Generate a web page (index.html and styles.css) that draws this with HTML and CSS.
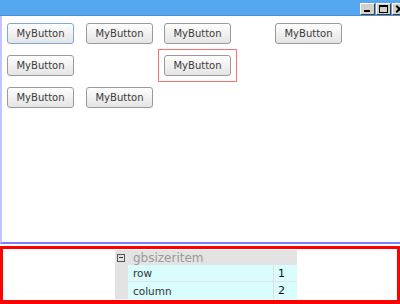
FILE: index.html
```html
<!DOCTYPE html>
<html lang="en">
<head>
  <meta charset="UTF-8">
  <title>gbsizer</title>
  <link rel="stylesheet" href="styles.css">
</head>
<body>

  <!-- Frame -->
  <div class="frame">
    <div class="titlebar">
      <div class="tb-btn"><span class="ico-min"></span></div>
      <div class="tb-btn"><span class="ico-max"></span></div>
      <div class="tb-btn"><span class="ico-close"></span></div>
    </div>

    <div class="client">
      <div class="grid">
        <div class="cell"><button class="btn focus">MyButton</button></div>
        <div class="cell"><button class="btn">MyButton</button></div>
        <div class="cell c2"><button class="btn">MyButton</button></div>
        <div class="cell"><button class="btn">MyButton</button></div>

        <div class="cell"><button class="btn">MyButton</button></div>
        <div class="cell"></div>
        <div class="cell selbox"><button class="btn">MyButton</button></div>
        <div class="cell"></div>

        <div class="cell"><button class="btn">MyButton</button></div>
        <div class="cell"><button class="btn">MyButton</button></div>
      </div>
    </div>
  </div>

  <!-- Property grid -->
  <div class="props">
    <div class="pgrid">
      <div class="pg-head">
        <span class="toggle"></span>
        <span class="pg-title">gbsizeritem</span>
      </div>
      <div class="pg-row">
        <div class="pg-name">row</div>
        <div class="pg-val">1</div>
      </div>
      <div class="pg-row">
        <div class="pg-name">column</div>
        <div class="pg-val">2</div>
      </div>
    </div>
  </div>

</body>
</html>
```

FILE: styles.css
```css
* { margin: 0; padding: 0; box-sizing: border-box; }

body {
  width: 400px;
  height: 304px;
  overflow: hidden;
  background: #fff;
  font-family: "DejaVu Sans", sans-serif;
}

.titlebar {
  height: 16px;
  background: #55a8ee;
  border-bottom: 1px solid #4a90d8;
  display: flex;
  justify-content: flex-end;
  align-items: flex-start;
  padding-top: 3px;
  gap: 1px;
  margin-right: -7px;
}

.tb-btn {
  width: 15px;
  height: 12px;
  background: #d4d0c8;
  border: 1px solid;
  border-color: #fff #404040 #404040 #fff;
  position: relative;
}

.ico-min {
  position: absolute;
  left: 3px; bottom: 2px;
  width: 6px; height: 2px;
  background: #000;
}

.ico-max {
  position: absolute;
  left: 2px; top: 1px;
  width: 9px; height: 8px;
  border: 1px solid #000;
  border-top-width: 2px;
}

.ico-close::before,
.ico-close::after {
  content: "";
  position: absolute;
  left: 2px; top: 4px;
  width: 9px; height: 2px;
  background: #000;
  transform: rotate(45deg);
}

.ico-close::after { transform: rotate(-45deg); }

.client {
  height: 228px;
  border-left: 2px solid #c4c4ff;
  border-bottom: 2px solid #7f7fff;
}

.grid {
  display: grid;
  grid-template-columns: 79px 72px 117px auto;
  grid-template-rows: repeat(3, 32px);
  align-items: center;
  padding: 1px 0 0 5px;
}

.cell { display: flex; align-items: center; }

.c2 { padding-left: 6px; }

.selbox {
  width: 79px;
  height: 33px;
  border: 1px solid #ff7070;
  padding-left: 5px;
}

.btn {
  width: 67px;
  height: 21px;
  font-family: "DejaVu Sans", sans-serif;
  font-size: 10px;
  color: #3a3a3a;
  background: linear-gradient(#fefefe, #e4e4e4);
  border: 1px solid #9a9a9a;
  border-radius: 3px;
}

.btn.focus { border-color: #7ea8d8; }

.props {
  margin-top: 2px;
  height: 58px;
  border: 3px solid #ff0000;
  border-bottom-width: 4px;
  padding: 1px 0 0 112px;
}

.pgrid { width: 182px; }

.pg-head {
  height: 15px;
  background: #e3e3e3;
  display: flex;
  align-items: center;
}

.toggle {
  width: 8px;
  height: 8px;
  margin: 0 8px 0 2px;
  border: 1px solid #555;
  position: relative;
}

.toggle::after {
  content: "";
  position: absolute;
  left: 1px; top: 2px;
  width: 4px; height: 1px;
  background: #333;
}

.pg-title {
  font-size: 12px;
  color: #999;
}

.pg-row {
  display: flex;
  height: 17px;
  background: #e3e3e3;
  padding-left: 13px;
  border-bottom: 1px solid #e3e3e3;
}

.pg-row + .pg-row { border-bottom: none; }

.pg-name, .pg-val {
  background: #d9fcfc;
  font-size: 10.5px;
  color: #333;
  display: flex;
  align-items: center;
}

.pg-name {
  width: 146px;
  padding-left: 5px;
  border-right: 1px solid #e0e0e0;
}

.pg-val {
  flex: 1;
  padding-left: 4px;
  font-size: 11px;
  color: #111;
}
```
